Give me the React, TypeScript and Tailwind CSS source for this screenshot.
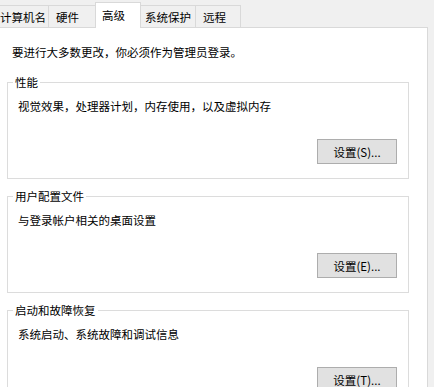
export default function App() {
  const groups = [
    { title: '性能', desc: '视觉效果，处理器计划，内存使用，以及虚拟内存', btn: '设置(S)...' },
    { title: '用户配置文件', desc: '与登录帐户相关的桌面设置', btn: '设置(E)...' },
    { title: '启动和故障恢复', desc: '系统启动、系统故障和调试信息', btn: '设置(T)...' },
  ]

  return (
    <div
      className="w-[434px] h-[387px] overflow-hidden bg-[#f0f0f0] text-[11.5px] text-black"
      style={{ fontFamily: '"Noto Sans CJK SC", "Microsoft YaHei", sans-serif' }}
    >
      {/* Tabs */}
      <div className="flex items-end h-[27px] leading-[16px]">
        <div className="-ml-[7px] w-[56px] h-[22px] pl-[7px] pt-[3px] border-t border-r border-[#d9d9d9] bg-[#f0f0f0] whitespace-nowrap">
          计算机名
        </div>
        <div className="w-[48px] h-[22px] pl-[7px] pt-[3px] border-t border-r border-[#d9d9d9] bg-[#f0f0f0]">
          硬件
        </div>
        <div className="relative z-10 -ml-[2px] -mb-px w-[46px] h-[26px] pl-[6px] pt-[4px] border-t border-l border-r border-[#d9d9d9] bg-white">
          高级
        </div>
        <div className="w-[55px] h-[22px] pl-[4px] pt-[3px] border-t border-r border-[#d9d9d9] bg-[#f0f0f0] whitespace-nowrap">
          系统保护
        </div>
        <div className="w-[45px] h-[22px] pl-[7px] pt-[3px] border-t border-r border-[#d9d9d9] bg-[#f0f0f0]">
          远程
        </div>
      </div>

      {/* Panel */}
      <div className="w-[428px] h-[360px] bg-white border-t border-r border-[#d9d9d9] pt-[16px]">
        <p className="pl-[12px] leading-[16px]">要进行大多数更改，你必须作为管理员登录。</p>

        <div className="mt-[14px] ml-[7px] w-[402px] flex flex-col gap-[9px]">
          {groups.map((g) => (
            <fieldset key={g.title} className="border border-[#dcdcdc] pb-[14px]">
              <legend className="ml-[5px] px-[2px] leading-[16px]">{g.title}</legend>
              <p className="mt-[8px] pl-[10px] leading-[16px]">{g.desc}</p>
              <div className="mt-[25px] flex justify-end pr-[11px]">
                <button className="w-[80px] h-[25px] bg-[#e1e1e1] border border-[#adadad] leading-[16px]">
                  {g.btn}
                </button>
              </div>
            </fieldset>
          ))}
        </div>
      </div>
    </div>
  )
}
